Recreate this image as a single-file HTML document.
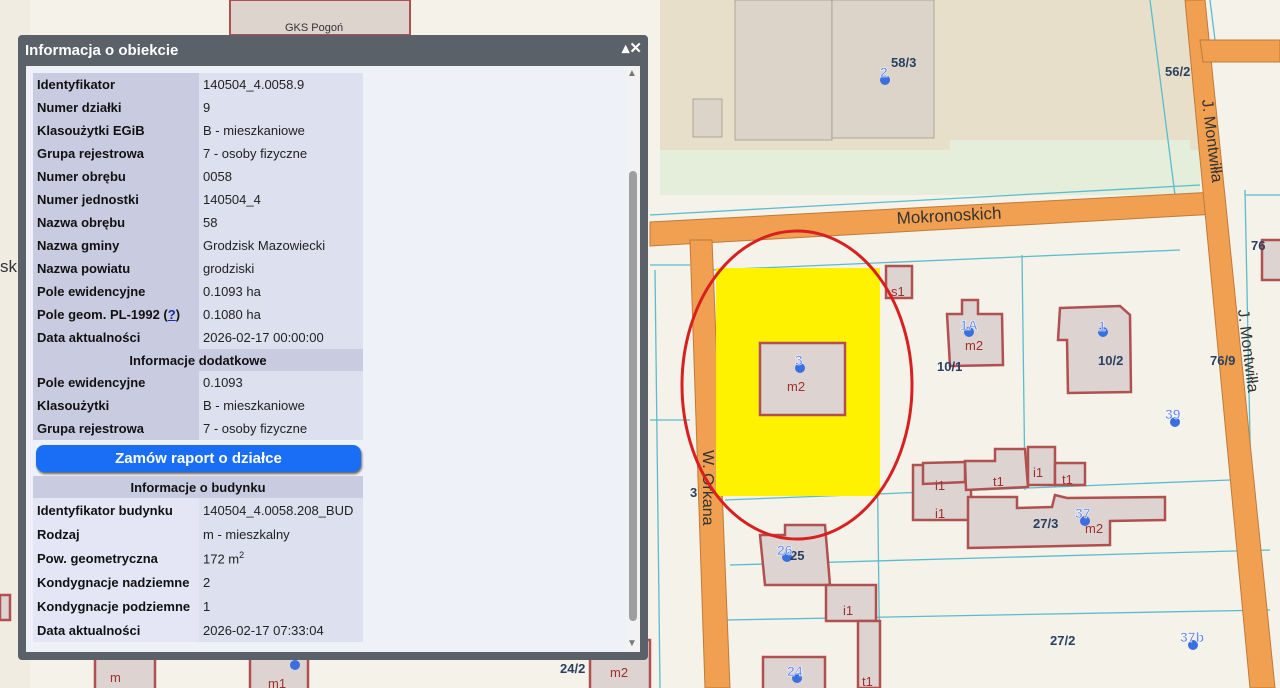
<!DOCTYPE html>
<html><head><meta charset="utf-8">
<style>
body{margin:0;width:1280px;height:688px;overflow:hidden;position:relative;font-family:"Liberation Sans",sans-serif;background:#f5f2ea}
svg.map{position:absolute;left:0;top:0}
.panel{position:absolute;left:18px;top:35px;width:630px;height:625px;background:#5b6169;border-radius:4px}
.title{position:absolute;left:7px;top:7px;color:#fff;font-weight:bold;font-size:15px}
.ctl{position:absolute;right:6px;top:4px;color:#fff;font-size:15px;font-weight:bold}
.inner{position:absolute;left:8px;top:31px;width:614px;height:586px;background:#eef1f8}
.sb{position:absolute;left:600px;top:0;width:14px;height:586px;background:#f2f2f2}
.thumb{position:absolute;left:603px;top:105px;width:8px;height:450px;background:#9e9e9e;border-radius:4px}
table{position:absolute;left:7px;top:7px;border-collapse:collapse;font-size:13px;width:330px}
td{height:23px;padding:0 4px;color:#111}
td.l{background:#c9cce0;font-weight:bold;width:158px}
td.v{background:#dde0ee;color:#222}
td.h{background:#c9cce0;font-weight:bold;text-align:center;height:22px}
tr.b td{height:24px}
.btn{display:block;margin:5px 2px 4px 3px;height:27px;background:#1a6ef5;border-radius:8px;color:#fff;font-weight:bold;font-size:15px;text-align:center;line-height:27px;box-shadow:1px 2px 2px #666}
</style></head><body>
<svg class="map" width="1280" height="688" xmlns="http://www.w3.org/2000/svg">
<rect width="1280" height="688" fill="#f5f2ea"/>
<rect x="660" y="0" width="540" height="195" fill="#e4eedb"/>
<rect x="660" y="0" width="540" height="150" fill="#e8dfca"/>
<rect x="735" y="0" width="97" height="140" fill="#ddd4c9" stroke="#9a9080" stroke-width="0.7"/>
<rect x="832" y="0" width="102" height="138" fill="#ddd4c9" stroke="#9a9080" stroke-width="0.7"/>
<rect x="693" y="99" width="29" height="38" fill="#ddd4c9" stroke="#9a9080" stroke-width="0.7"/>
<rect x="950" y="140" width="240" height="25" fill="#e4eedb"/>
<rect x="0" y="0" width="30" height="688" fill="#f0ece2"/>
<rect x="230" y="0" width="180" height="35" fill="#dcd4cd" stroke="#b05050" stroke-width="2"/>
<text x="285" y="31" font-size="11" fill="#333">GKS Pogoń</text>
<g stroke="#5bbccc" stroke-width="1.3" fill="none">
<path d="M650 215 L1200 185"/><path d="M712 270 L1180 250"/><path d="M1022 255 L1025 490"/><path d="M725 500 L1230 480"/><path d="M730 565 L1270 550"/><path d="M725 620 L1270 610"/><path d="M875 270 L880 688"/><path d="M650 265 L690 265"/><path d="M650 420 L690 420"/><path d="M655 270 L660 688"/><path d="M1150 0 L1175 195"/><path d="M1245 190 L1255 688"/><path d="M1245 195 L1280 195"/><path d="M1210 0 L1215 40"/>
</g>
<g fill="#f0a050" stroke="#c07a38" stroke-width="1">
<path d="M650 222 L1215 192 L1217 214 L650 246 Z"/>
<path d="M690 240 L712 240 L730 688 L705 688 Z"/>
<path d="M1185 0 L1205 0 L1275 688 L1250 688 Z"/>
<path d="M1200 40 L1280 40 L1280 62 L1203 62 Z"/>
</g>
<text x="897" y="224" font-size="17" fill="#333" transform="rotate(-3 897 224)">Mokronoskich</text>
<text x="1202" y="100" font-size="16" fill="#333" transform="rotate(83 1202 100)">J. Montwiłła</text>
<text x="1238" y="310" font-size="16" fill="#333" transform="rotate(83 1238 310)">J. Montwiłła</text>
<text x="703" y="450" font-size="16" fill="#333" transform="rotate(90 703 450)">W. Orkana</text>
<rect x="716" y="268" width="164" height="228" fill="#fff200"/>
<g fill="#ddd3d0" stroke="#b05050" stroke-width="2.5">
<rect x="760" y="343" width="85" height="72"/>
<rect x="886" y="266" width="26" height="32"/>
<path d="M947 314 L962 314 L962 300 L978 300 L978 314 L1002 314 L1003 365 L950 366 Z"/>
<path d="M1060 308 L1120 306 L1130 315 L1131 392 L1068 393 L1067 340 L1058 340 Z"/>
<rect x="913" y="465" width="58" height="55"/>
<path d="M923 463 L965 462 L965 482 L923 484Z"/>
<path d="M965 461 L995 461 L995 449 L1025 449 L1028 487 L966 490 Z"/>
<rect x="1028" y="447" width="27" height="38"/>
<rect x="1055" y="463" width="30" height="22"/>
<path d="M968 497 L1017 497 L1017 508 L1052 507 L1055 495 L1067 498 L1165 497 L1165 520 L1110 521 L1110 545 L968 548Z"/>
<path d="M760 535 L785 535 L785 525 L825 525 L830 585 L765 585 Z"/>
<rect x="826" y="585" width="50" height="36"/>
<rect x="858" y="621" width="22" height="67"/>
<rect x="763" y="657" width="62" height="40"/>
<rect x="590" y="640" width="60" height="50"/>
<rect x="95" y="655" width="60" height="40"/>
<rect x="250" y="655" width="58" height="40"/>
<rect x="0" y="595" width="10" height="25"/>
<rect x="1262" y="240" width="20" height="40"/>
</g>
<g fill="#3a6fe0"><circle cx="885" cy="80" r="5"/><circle cx="800" cy="368" r="5"/><circle cx="969" cy="332" r="5"/><circle cx="1103" cy="332" r="5"/><circle cx="1175" cy="422" r="5"/><circle cx="1085" cy="521" r="5"/><circle cx="787" cy="557" r="5"/><circle cx="797" cy="678" r="5"/><circle cx="1193" cy="645" r="5"/><circle cx="295" cy="665" r="5"/></g>
<g font-size="13" font-weight="bold" fill="#2a4060">
<text x="891" y="67">58/3</text><text x="1165" y="76">56/2</text><text x="937" y="371">10/1</text><text x="1098" y="365">10/2</text><text x="1210" y="365">76/9</text><text x="1251" y="250">76</text><text x="1033" y="528">27/3</text><text x="1050" y="645">27/2</text><text x="790" y="560">25</text><text x="560" y="673">24/2</text><text x="690" y="497">3</text>
</g>
<g font-size="14" font-weight="bold" fill="#6a8cf0" stroke="#fff" stroke-width="0.5">
<text x="880" y="77">2</text><text x="795" y="365">3</text><text x="960" y="330">1A</text><text x="1098" y="331">1</text><text x="1165" y="419">39</text><text x="1075" y="518">37</text><text x="777" y="555">26</text><text x="1180" y="642">37b</text><text x="787" y="676">24</text>
</g>
<g font-size="13" fill="#a03030">
<text x="787" y="391">m2</text><text x="891" y="296">s1</text><text x="965" y="350">m2</text><text x="935" y="490">i1</text><text x="993" y="486">t1</text><text x="1033" y="477">i1</text><text x="1062" y="484">t1</text><text x="935" y="518">i1</text><text x="1085" y="533">m2</text><text x="843" y="615">i1</text><text x="862" y="686">t1</text><text x="610" y="677">m2</text><text x="110" y="682">m</text><text x="268" y="688">m1</text>
</g>
<text x="0" y="272" font-size="17" fill="#333">sk</text>
<ellipse cx="797" cy="385" rx="115" ry="154" fill="none" stroke="#d82020" stroke-width="3"/>
</svg>
<div class="panel">
<div class="title">Informacja o obiekcie</div>
<div class="ctl">▴✕</div>
<div class="inner">
<div class="sb"></div><div class="thumb"></div>
<div style="position:absolute;left:601px;top:2px;font-size:10px;color:#777">▲</div>
<div style="position:absolute;left:601px;top:572px;font-size:10px;color:#777">▼</div>
<table>
<tr><td class="l">Identyfikator</td><td class="v">140504_4.0058.9</td></tr>
<tr><td class="l">Numer działki</td><td class="v">9</td></tr>
<tr><td class="l">Klasoużytki EGiB</td><td class="v">B - mieszkaniowe</td></tr>
<tr><td class="l">Grupa rejestrowa</td><td class="v">7 - osoby fizyczne</td></tr>
<tr><td class="l">Numer obrębu</td><td class="v">0058</td></tr>
<tr><td class="l">Numer jednostki</td><td class="v">140504_4</td></tr>
<tr><td class="l">Nazwa obrębu</td><td class="v">58</td></tr>
<tr><td class="l">Nazwa gminy</td><td class="v">Grodzisk Mazowiecki</td></tr>
<tr><td class="l">Nazwa powiatu</td><td class="v">grodziski</td></tr>
<tr><td class="l">Pole ewidencyjne</td><td class="v">0.1093 ha</td></tr>
<tr><td class="l">Pole geom. PL-1992 (<u style="color:#1a2aa0">?</u>)</td><td class="v">0.1080 ha</td></tr>
<tr><td class="l">Data aktualności</td><td class="v">2026-02-17 00:00:00</td></tr>
<tr><td class="h" colspan="2">Informacje dodatkowe</td></tr>
<tr><td class="l">Pole ewidencyjne</td><td class="v">0.1093</td></tr>
<tr><td class="l">Klasoużytki</td><td class="v">B - mieszkaniowe</td></tr>
<tr><td class="l">Grupa rejestrowa</td><td class="v">7 - osoby fizyczne</td></tr>
<tr><td colspan="2" style="padding:0;background:#eef1f8"><span class="btn">Zamów raport o działce</span></td></tr>
<tr><td class="h" colspan="2">Informacje o budynku</td></tr>
<tr class="b"><td class="l" style="background:#e4e6f6">Identyfikator budynku</td><td class="v">140504_4.0058.208_BUD</td></tr>
<tr class="b"><td class="l" style="background:#e4e6f6">Rodzaj</td><td class="v">m - mieszkalny</td></tr>
<tr class="b"><td class="l" style="background:#e4e6f6">Pow. geometryczna</td><td class="v">172 m<sup style="font-size:9px">2</sup></td></tr>
<tr class="b"><td class="l" style="background:#e4e6f6">Kondygnacje nadziemne</td><td class="v">2</td></tr>
<tr class="b"><td class="l" style="background:#e4e6f6">Kondygnacje podziemne</td><td class="v">1</td></tr>
<tr class="b"><td class="l" style="background:#e4e6f6">Data aktualności</td><td class="v">2026-02-17 07:33:04</td></tr>
</table>
</div></div>
</body></html>
